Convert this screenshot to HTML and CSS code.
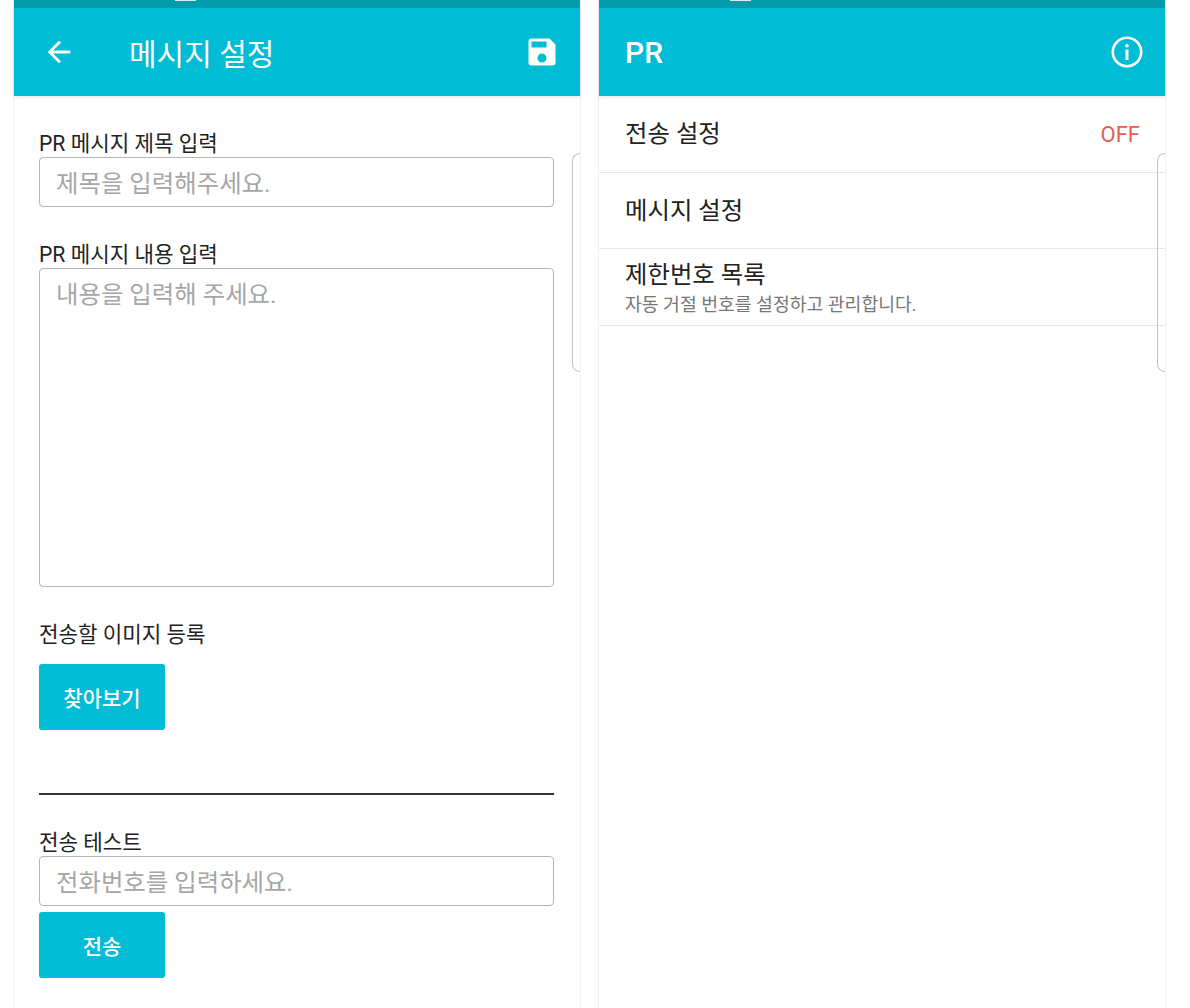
FILE: index.html
```html
<!DOCTYPE html>
<html lang="ko">
<head>
<meta charset="UTF-8" />
<title>PR 설정</title>
<link rel="stylesheet" href="styles.css">
</head>
<body>
<div class="screens">

  <!-- Message settings -->
  <section class="phone">
    <div class="status-bar"><span class="status-tick tick-left"></span></div>
    <header class="app-bar">
      <svg class="icon back-icon" viewBox="0 0 24 24"><path d="M20 11H7.83l5.59-5.59L12 4l-8 8 8 8 1.41-1.41L7.83 13H20z"/></svg>
      <h1 class="bar-title">메시지 설정</h1>
      <svg class="icon save-icon" viewBox="0 0 24 24"><path d="M17 3H5a2 2 0 0 0-2 2v14a2 2 0 0 0 2 2h14a2 2 0 0 0 2-2V7l-4-4zm-5 16a3 3 0 1 1 0-6 3 3 0 0 1 0 6zm3-10H5V5h10v4z"/></svg>
    </header>
    <main class="form">
      <label class="field-label">PR 메시지 제목 입력</label>
      <div class="text-box input-box">제목을 입력해주세요.</div>
      <label class="field-label">PR 메시지 내용 입력</label>
      <div class="text-box area-box">내용을 입력해 주세요.</div>
      <label class="field-label">전송할 이미지 등록</label>
      <button class="action-btn btn-browse">찾아보기</button>
      <hr class="divider" />
      <label class="field-label">전송 테스트</label>
      <div class="text-box input-box">전화번호를 입력하세요.</div>
      <button class="action-btn btn-send">전송</button>
    </main>
    <div class="peek-card"></div>
  </section>

  <!-- PR menu -->
  <section class="phone">
    <div class="status-bar"><span class="status-tick tick-right"></span></div>
    <header class="app-bar">
      <h1 class="bar-title title-pr">PR</h1>
      <svg class="icon info-icon" viewBox="0 0 32 32">
        <circle cx="16" cy="16" r="14.2" fill="none" stroke="#fff" stroke-width="2.6"/>
        <circle cx="16" cy="9.8" r="1.8"/>
        <rect x="14.5" y="13.5" width="3" height="10.5"/>
      </svg>
    </header>
    <ul class="menu">
      <li class="menu-row row-first">
        <span class="row-title">전송 설정</span>
        <span class="row-state">OFF</span>
      </li>
      <li class="menu-row">
        <span class="row-title">메시지 설정</span>
      </li>
      <li class="menu-row row-double">
        <span class="row-title">제한번호 목록</span>
        <span class="row-sub">자동 거절 번호를 설정하고 관리합니다.</span>
      </li>
    </ul>
    <div class="peek-card"></div>
  </section>

</div>
</body>
</html>
```

FILE: styles.css
```css
html, body {
  margin: 0;
  padding: 0;
  height: 100%;
  overflow: hidden;
  background: #fff;
}
body {
  font-family: Roboto, "Noto Sans CJK KR", sans-serif;
  color: #222;
}
.screens {
  display: flex;
  gap: 19px;
  padding-left: 14px;
  height: 1008px;
}
.phone {
  position: relative;
  width: 566px;
  height: 1008px;
  background: #fff;
  box-shadow: 0 0 0 1px #f0f0f0;
}

/* Top bars */
.status-bar {
  position: relative;
  height: 8px;
  background: #019bab;
}
.status-tick {
  position: absolute;
  top: 0;
  width: 21px;
  height: 1px;
  background: #d9eef0;
}
.tick-left { left: 161px; }
.tick-right { left: 131px; }
.app-bar {
  display: flex;
  align-items: center;
  height: 88px;
  background: #00bcd4;
  box-shadow: 0 1px 4px rgba(0,0,0,0.12);
  color: #fff;
}
.bar-title {
  margin: 0;
  font-size: 30px;
  font-weight: 400;
}
.title-pr {
  margin-left: 26px;
  font-weight: 500;
}
.icon {
  fill: #fff;
  flex: none;
}
.back-icon {
  width: 34px;
  height: 34px;
  margin-left: 28px;
  margin-right: 53px;
}
.save-icon {
  width: 36px;
  height: 36px;
  margin-left: auto;
  margin-right: 20px;
}
.info-icon {
  width: 32px;
  height: 32px;
  margin-left: auto;
  margin-right: 22px;
}

/* Form */
.form {
  display: flex;
  flex-direction: column;
  align-items: flex-start;
  padding: 0 25px;
}
.field-label {
  margin-top: 36px;
  margin-bottom: 1px;
  font-size: 21.2px;
  line-height: 24px;
  color: #222;
}
.text-box {
  box-sizing: border-box;
  width: 515px;
  padding: 0 16px;
  border: 1px solid #b4b4b4;
  border-radius: 4px;
  font-size: 24.4px;
  line-height: 52px;
  color: #a6a6a6;
}
.input-box {
  height: 50px;
}
.area-box {
  height: 319px;
}
.action-btn {
  width: 126px;
  height: 66px;
  padding: 0;
  border: 0;
  border-radius: 3px;
  background: #00bcd4;
  color: #fff;
  font-family: inherit;
  font-size: 21px;
  font-weight: 500;
}
.btn-browse { margin-top: 16px; }
.btn-send { margin-top: 6px; }
.divider {
  box-sizing: border-box;
  width: 515px;
  height: 2px;
  margin: 63px 0 0;
  border: 0;
  background: #333;
}

/* Menu list */
.menu {
  margin: 0;
  padding: 0;
  list-style: none;
}
.menu-row {
  display: flex;
  align-items: center;
  justify-content: space-between;
  box-sizing: border-box;
  height: 76px;
  padding: 0 25px 0 26px;
  border-bottom: 1px solid #e6e6e6;
}
.row-first {
  height: 77px;
}
.row-double {
  flex-direction: column;
  align-items: flex-start;
  justify-content: flex-start;
  height: 77px;
  padding-top: 9px;
}
.row-title {
  font-size: 24.4px;
  line-height: 34px;
  color: #222;
}
.row-state {
  font-size: 22px;
  color: #e2614f;
}
.row-sub {
  margin-top: 1px;
  font-size: 18.25px;
  line-height: 24px;
  color: #777;
}

/* Next card peeking in from the right */
.peek-card {
  position: absolute;
  top: 153px;
  right: 0;
  width: 7px;
  height: 217px;
  border: 1px solid #c4c4c4;
  border-right: 0;
  border-radius: 8px 0 0 8px;
}
```
